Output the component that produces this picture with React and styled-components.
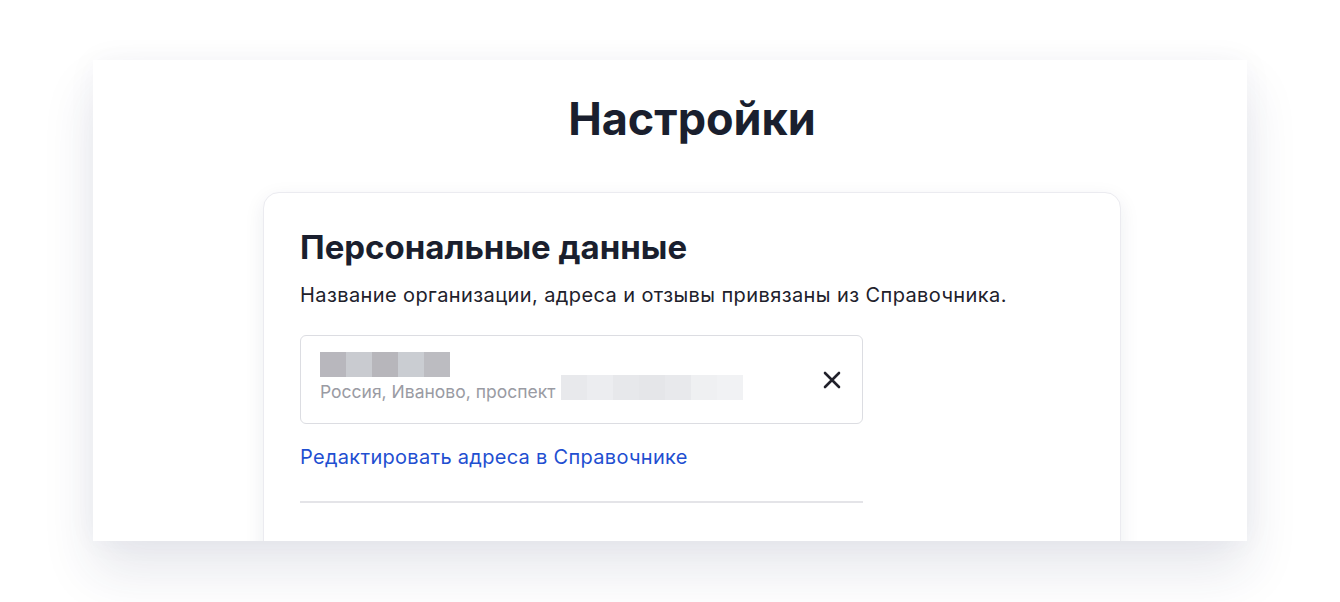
import React from 'react';
import styled, {createGlobalStyle} from 'styled-components';

const GlobalStyle = createGlobalStyle`
body{
    margin:0;
    background:#fff;
    font-family:Inter,"Noto Sans",sans-serif;
    color:#21212b;
}
`;

const nameBlocks = ['#b8b7bd','#c9cbd0','#b7b6bb','#cacdd2','#bcbcc1'];
const addrBlocks = ['#e8e9ec','#ecedf0','#e7e8eb','#e5e6e9','#e8e9ec','#eff0f2','#f1f2f4'];

const App = () =>{
    return(
        <Page>
            <GlobalStyle />
            <Panel>
                <Title>Настройки</Title>
                <Card>
                    <CardTitle>Персональные данные</CardTitle>
                    <Hint>Название организации, адреса и отзывы привязаны из Справочника.</Hint>
                    <Field>
                        <FieldText>
                            <Mosaic>
                                {nameBlocks.map((c,i)=><Block key={i} $color={c} />)}
                            </Mosaic>
                            <Address>
                                <span>Россия, Иваново, проспект</span>
                                <Mosaic>
                                    {addrBlocks.map((c,i)=><Block key={i} $color={c} />)}
                                </Mosaic>
                            </Address>
                        </FieldText>
                        <Clear aria-label="Очистить">
                            <svg width="18" height="18" viewBox="0 0 18 18">
                                <path d="M2 2L16 16M16 2L2 16" stroke="#21212b" strokeWidth="2.6" strokeLinecap="round"/>
                            </svg>
                        </Clear>
                    </Field>
                    <EditLink href="#">Редактировать адреса в Справочнике</EditLink>
                    <Divider />
                </Card>
            </Panel>
        </Page>
    )
}

const Page = styled.div`
min-height:602px;
padding:60px 93px 0 93px;
box-sizing:border-box;
`;
const Panel = styled.div`
width:1154px;
height:481px;
overflow:hidden;
box-sizing:border-box;
padding-left:44px;
background:#fff;
display:flex;
flex-direction:column;
align-items:center;
box-shadow:0 30px 50px rgba(40,50,90,0.11), 0 0 30px rgba(40,50,90,0.04);
`;
const Title = styled.h1`
margin:33px 0 0;
font-size:45px;
line-height:52px;
font-weight:700;
color:#1a1f2e;
`;
const Card = styled.div`
margin-top:47px;
width:858px;
min-height:400px;
box-sizing:border-box;
padding:33px 36px;
border:1px solid #ebebf0;
border-radius:16px;
box-shadow:0 6px 20px rgba(30,40,80,0.08);
background:#fff;
flex-shrink:0;
`;
const CardTitle = styled.h2`
margin:0;
font-size:33px;
line-height:42px;
font-weight:700;
color:#1a1f2e;
`;
const Hint = styled.p`
margin:14px 0 0;
font-size:20px;
line-height:26px;
letter-spacing:0.4px;
color:#21212b;
`;
const Field = styled.div`
margin-top:27px;
width:563px;
height:89px;
box-sizing:border-box;
border:1px solid #dcdde2;
border-radius:6px;
display:flex;
align-items:center;
justify-content:space-between;
padding:0 21px 0 19px;
`;
const FieldText = styled.div`
display:flex;
flex-direction:column;
margin-top:-6px;
`;
const Mosaic = styled.div`
display:flex;
`;
const Block = styled.div`
width:26px;
height:25px;
background:${p=>p.$color};
`;
const Address = styled.div`
display:flex;
align-items:center;
gap:6px;
margin-top:-4px;
font-size:17.5px;
color:#9a9ba3;
span{
    margin-top:8px;
}
`;
const Clear = styled.button`
border:0;
background:none;
padding:0;
cursor:pointer;
display:flex;
`;
const EditLink = styled.a`
display:inline-block;
margin-top:20px;
font-size:20px;
line-height:26px;
letter-spacing:0.3px;
color:#1f4fd1;
text-decoration:none;
`;
const Divider = styled.div`
margin-top:31px;
width:563px;
height:2px;
background:#e4e4e8;
`;

export default App;
